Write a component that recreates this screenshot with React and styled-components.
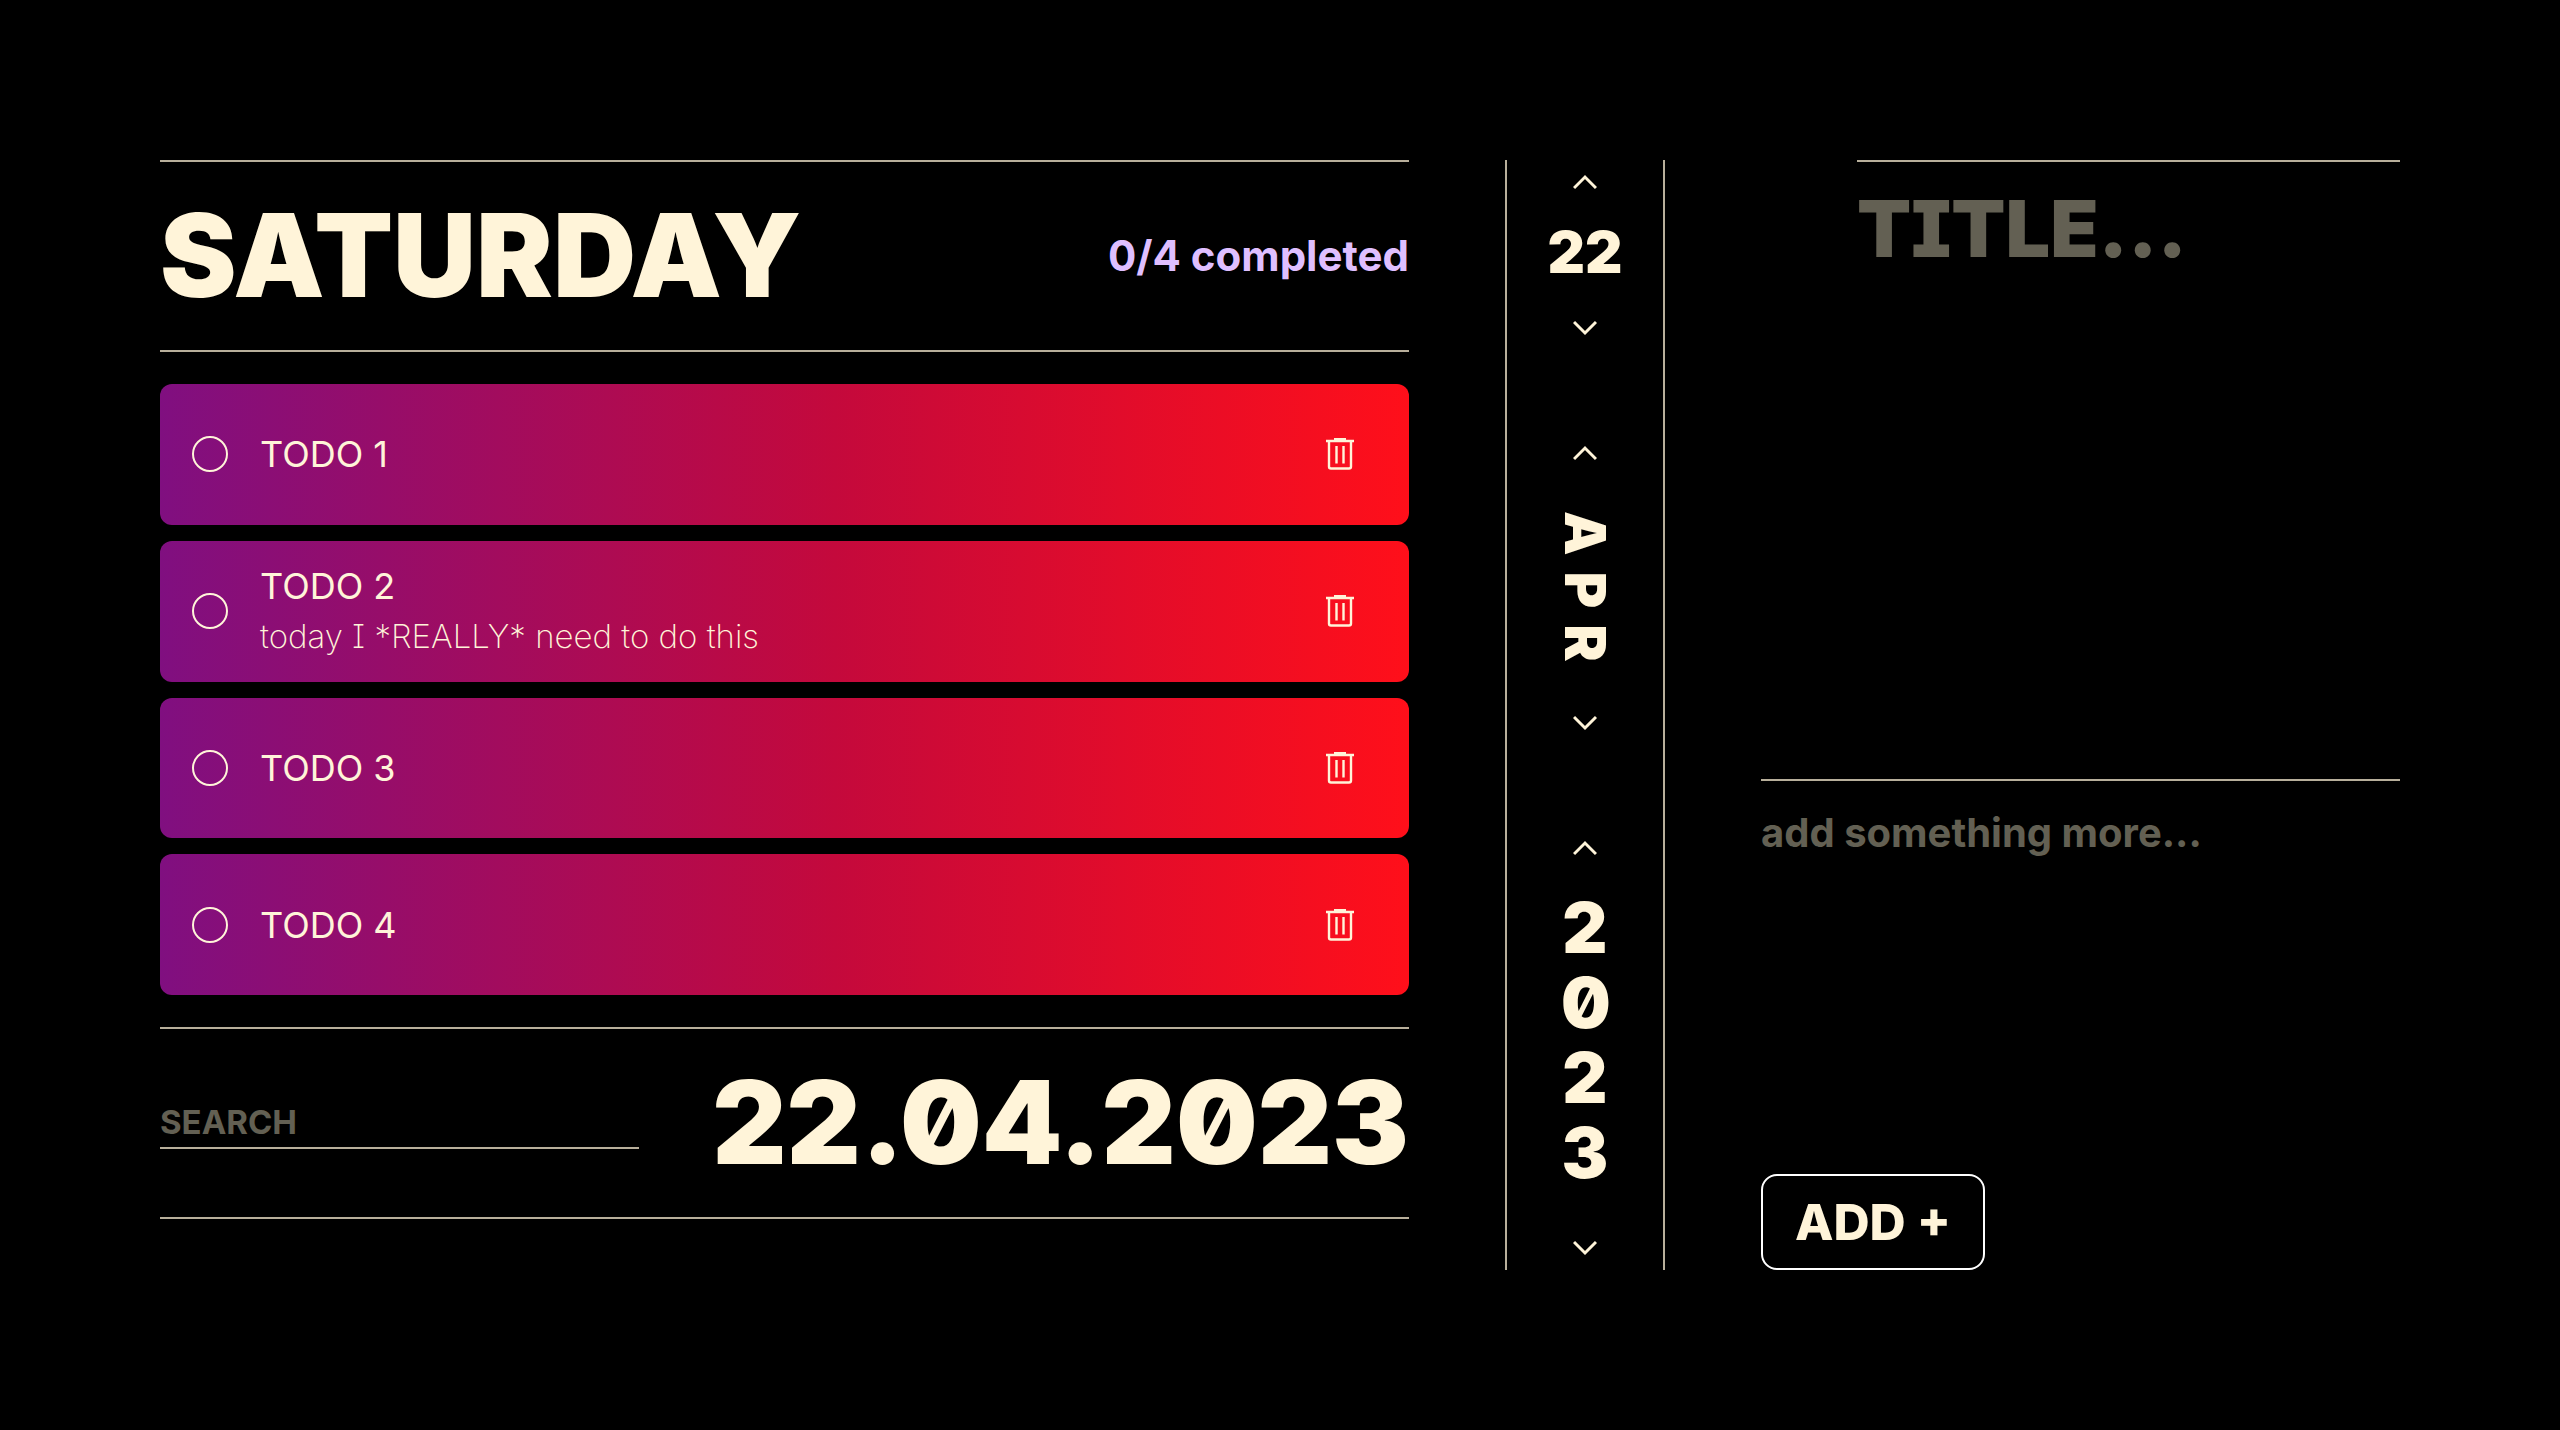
import React, { useState } from "react";
import styled, { createGlobalStyle } from "styled-components";

const cream = "#fff4d9";
const line = "#b8af9b";
const muted = "#636053";

const GlobalStyle = createGlobalStyle`
  * { box-sizing: border-box; }
  body {
    margin: 0;
    background: #000;
    color: ${cream};
    font-family: Inter, "Liberation Sans", sans-serif;
    font-feature-settings: "cv08" 1;
  }
  button, input, textarea {
    font: inherit;
    font-feature-settings: inherit;
    color: inherit;
    background: none;
    border: 0;
    padding: 0;
    margin: 0;
    border-radius: 0;
  }
  button { cursor: pointer; }
  input:focus, textarea:focus { outline: none; }
`;

const Page = styled.main`
  min-height: 100vh;
  padding: 160px;
  display: grid;
  grid-template-columns: minmax(0, 1249fr) 160px minmax(0, 639fr);
  gap: 96px;
`;

const Board = styled.section`
  display: flex;
  flex-direction: column;
  padding-bottom: 51px;
`;

const Bar = styled.header`
  height: 192px;
  flex: none;
  border-top: 2px solid ${line};
  border-bottom: 2px solid ${line};
  display: flex;
  align-items: center;
  justify-content: space-between;
  gap: 72px;
  overflow: hidden;
`;

const Display = styled.h1`
  margin: 0;
  font-size: 115px;
  line-height: 120px;
  font-weight: 900;
  white-space: nowrap;
  font-feature-settings: "zero" 1;
`;

const Counter = styled.p`
  margin: 0;
  font-size: 42px;
  line-height: 48px;
  font-weight: 700;
  color: #dfbfff;
`;

const List = styled.ul`
  list-style: none;
  margin: 0;
  padding: 32px 0;
  flex: 1;
  display: flex;
  flex-direction: column;
  gap: 16px;
`;

const Item = styled.li`
  flex: 1;
  min-height: 120px;
  padding: 0 47px 0 32px;
  border-radius: 12px;
  background: linear-gradient(90deg, #800f80, #c4093c 54%, #ff0f1a);
  display: flex;
  align-items: center;
  gap: 32px;
`;

const Tick = styled.input`
  appearance: none;
  width: 36px;
  height: 36px;
  flex: none;
  && {
    border: 2px solid ${cream};
    border-radius: 50%;
  }
  &:checked { background: ${cream}; }
`;

const ItemText = styled.label`
  flex: 1;
  display: flex;
  flex-direction: column;
  gap: 6px;
`;

const ItemTitle = styled.span`
  font-size: 36px;
  line-height: 44px;
  font-weight: 400;
`;

const ItemNote = styled.span`
  font-size: 33px;
  line-height: 44px;
  font-weight: 200;
`;

const IconButton = styled.button`
  display: flex;
  width: 44px;
  height: 44px;
  align-items: center;
  justify-content: center;
`;

const Search = styled.input`
  && {
    flex: 1;
    max-width: 479px;
    min-width: 0;
    height: 52px;
    border-bottom: 2px solid ${line};
    font-size: 33px;
    font-weight: 700;
  }
  &::placeholder { color: ${muted}; opacity: 1; }
`;

const DateRail = styled.aside`
  border-left: 2px solid ${line};
  border-right: 2px solid ${line};
  display: flex;
  flex-direction: column;
  align-items: center;
  justify-content: space-between;
`;

const Stepper = styled.div`
  display: flex;
  flex-direction: column;
  align-items: center;
`;

const Day = styled.span`
  padding: 18px 0 24px;
  font-size: 58px;
  line-height: 60px;
  font-weight: 900;
`;

const Month = styled.span`
  writing-mode: vertical-rl;
  padding: 36px 0 24px;
  font-size: 56px;
  line-height: 60px;
  font-weight: 900;
  letter-spacing: 16px;
`;

const Year = styled.span`
  width: 48px;
  padding: 20px 0 36px;
  text-align: center;
  overflow-wrap: anywhere;
  font-size: 70px;
  line-height: 75px;
  font-weight: 900;
  font-feature-settings: "zero" 1;
`;

const Form = styled.form`
  display: flex;
  flex-direction: column;
  align-items: flex-start;
`;

const TitleField = styled.textarea`
  && {
    align-self: stretch;
    flex: 1;
    margin-left: 96px;
    padding-top: 18px;
    border-top: 2px solid ${line};
    resize: none;
    font-size: 79px;
    line-height: 96px;
    font-weight: 900;
  }
  &::placeholder { color: ${muted}; opacity: 1; }
`;

const NoteField = styled.textarea`
  && {
    align-self: stretch;
    height: 395px;
    padding-top: 28px;
    border-top: 2px solid ${line};
    resize: none;
    font-size: 40px;
    line-height: 48px;
    font-weight: 700;
  }
  &::placeholder { color: ${muted}; opacity: 1; }
`;

const AddButton = styled.button`
  && {
    height: 96px;
    padding: 0 32px;
    border: 2px solid #fff;
    border-radius: 16px;
    font-size: 50px;
    font-weight: 800;
  }
`;

const Chevron = ({ down }) => (
  <svg width="24" height="16" viewBox="0 0 24 16" fill="none" stroke={cream} strokeWidth="3">
    <path d={down ? "M1 2 12 13 23 2" : "M1 14 12 3 23 14"} />
  </svg>
);

const Trash = () => (
  <svg width="28" height="32" viewBox="0 0 28 32" fill="none" stroke={cream} strokeWidth="2.4">
    <path d="M0 3h28M8 1h12" />
    <path d="M3 3v25.500q0 2 2 2h18q2 0 2-2V3M10.500 8v17.500M17.500 8v17.500" />
  </svg>
);

const StepButton = ({ down, label }) => (
  <IconButton type="button" aria-label={label}>
    <Chevron down={down} />
  </IconButton>
);

const initial = [
  { title: "TODO 1" },
  { title: "TODO 2", note: "today I *REALLY* need to do this" },
  { title: "TODO 3" },
  { title: "TODO 4" },
];

export default function App() {
  const [todos] = useState(initial);
  return (
    <>
      <GlobalStyle />
      <Page>
        <Board>
          <Bar>
            <Display>SATURDAY</Display>
            <Counter>0/4 completed</Counter>
          </Bar>
          <List>
            {todos.map((t, i) => (
              <Item key={t.title}>
                <Tick type="checkbox" id={`todo-${i}`} />
                <ItemText htmlFor={`todo-${i}`}>
                  <ItemTitle>{t.title}</ItemTitle>
                  {t.note && <ItemNote>{t.note}</ItemNote>}
                </ItemText>
                <IconButton type="button" aria-label="Delete">
                  <Trash />
                </IconButton>
              </Item>
            ))}
          </List>
          <Bar as="footer">
            <Search aria-label="Search" placeholder="SEARCH" />
            <Display as="time" dateTime="2023-04-22">22.04.2023</Display>
          </Bar>
        </Board>
        <DateRail>
          <Stepper>
            <StepButton label="Next day" />
            <Day>22</Day>
            <StepButton down label="Previous day" />
          </Stepper>
          <Stepper>
            <StepButton label="Next month" />
            <Month>APR</Month>
            <StepButton down label="Previous month" />
          </Stepper>
          <Stepper>
            <StepButton label="Next year" />
            <Year>2023</Year>
            <StepButton down label="Previous year" />
          </Stepper>
        </DateRail>
        <Form onSubmit={(e) => e.preventDefault()}>
          <TitleField aria-label="Title" placeholder="TITLE..." />
          <NoteField aria-label="Description" placeholder="add something more..." />
          <AddButton type="submit">ADD +</AddButton>
        </Form>
      </Page>
    </>
  );
}
